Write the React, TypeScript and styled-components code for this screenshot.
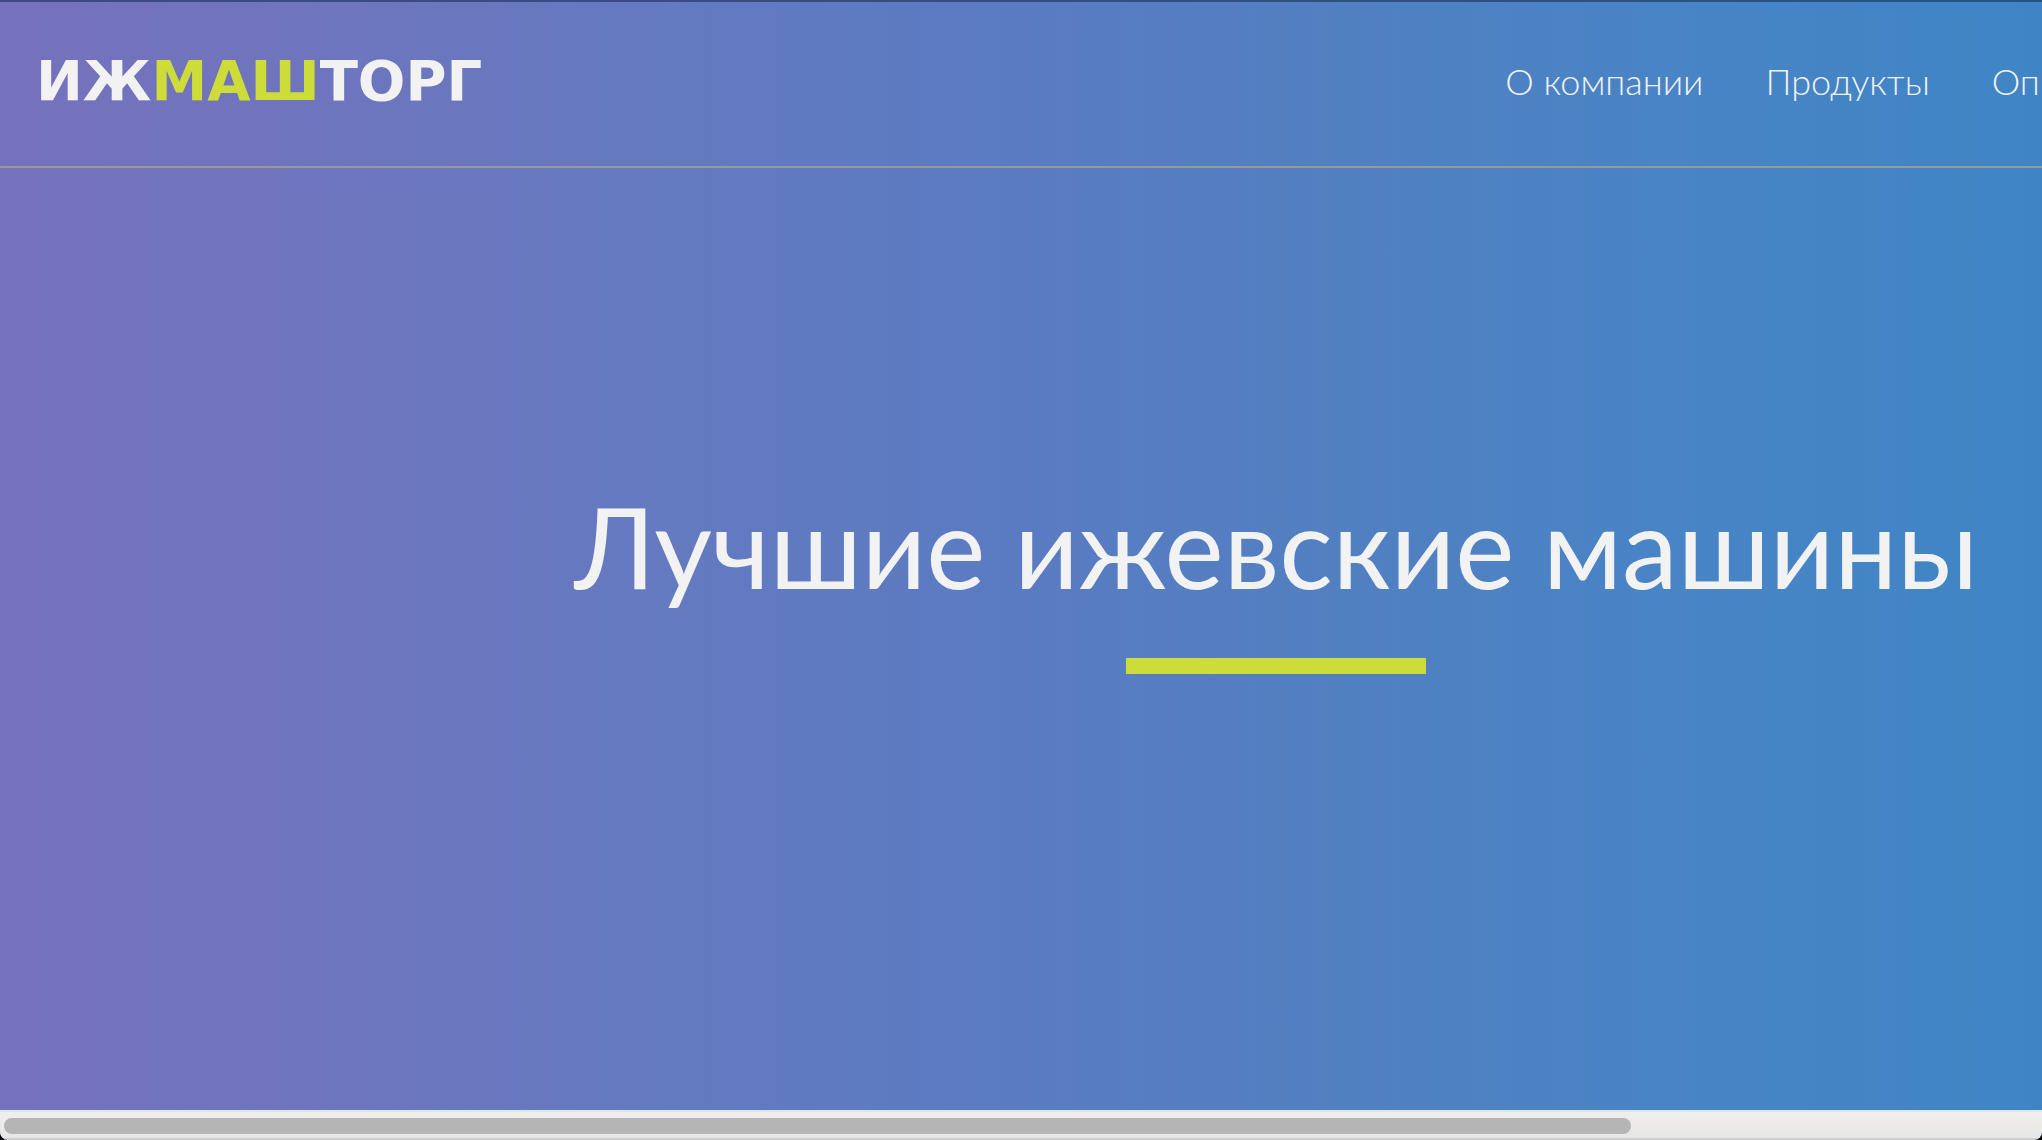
import React from "react";
import styled, { createGlobalStyle } from "styled-components";

const GlobalStyle = createGlobalStyle`
  * { box-sizing: border-box; }
  body { margin: 0; background: #000; }
`;

const Window = styled.div`
  display: flex;
  flex-direction: column;
  height: 100vh;
  overflow: hidden;
  border-radius: 0 0 8px 8px;
  color: #f2f2f2;
  font-family: Lato, "Open Sans", sans-serif;
  background: linear-gradient(90deg, #7671bd 0%, #7074bd 12%, #6579c0 30%, #5a7bc2 50%, #5180c1 66%, #4884c6 82%, #3f85c5 100%);
`;

const Page = styled.div`
  display: flex;
  flex: 1;
  flex-direction: column;
  width: 125%;
  border-top: 2px solid rgba(20, 40, 80, 0.55);
`;

const Header = styled.header`
  display: grid;
  grid-template-columns: 1469fr 1011fr;
  align-items: center;
  height: 166px;
  padding: 0 36px 6px;
  border-bottom: 2px solid #999a97;
`;

const Brand = styled.a`
  color: inherit;
  font: 700 56px/64px "DejaVu Sans", sans-serif;
  text-decoration: none;
`;

const Accent = styled.span`
  color: #cddc39;
`;

const Nav = styled.nav`
  display: flex;
  gap: 62px;
`;

const NavLink = styled.a`
  color: inherit;
  font-size: 36px;
  font-weight: 300;
  line-height: 48px;
  text-decoration: none;
  white-space: nowrap;
`;

const Hero = styled.main`
  display: flex;
  flex: 1;
  flex-direction: column;
  align-items: center;
  justify-content: center;
  gap: 32px;
  padding-bottom: 138px;
`;

const Title = styled.h1`
  margin: 0;
  font-size: 112px;
  font-weight: 400;
  line-height: 160px;
  white-space: nowrap;
`;

const Underline = styled.div`
  width: 300px;
  height: 16px;
  background: #cddc39;
`;

const ScrollTrack = styled.div`
  height: 30px;
  padding: 6px 4px;
  border-top: 2px solid #dce6ee;
  border-bottom: 2px solid #cfcfcf;
  background: linear-gradient(#f0efec, #e6e6e6);
`;

const ScrollThumb = styled.div`
  width: 80%;
  height: 16px;
  border-radius: 8px;
  background: #b5b5b5;
`;

const links = ["О компании", "Продукты", "Оп"];

export default function App() {
  return (
    <>
      <GlobalStyle />
      <Window>
        <Page>
          <Header>
            <Brand href="#">
              ИЖ<Accent>МАШ</Accent>ТОРГ
            </Brand>
            <Nav>
              {links.map((label) => (
                <NavLink key={label} href="#">
                  {label}
                </NavLink>
              ))}
            </Nav>
          </Header>
          <Hero>
            <Title>Лучшие ижевские машины</Title>
            <Underline />
          </Hero>
        </Page>
        <ScrollTrack>
          <ScrollThumb />
        </ScrollTrack>
      </Window>
    </>
  );
}
